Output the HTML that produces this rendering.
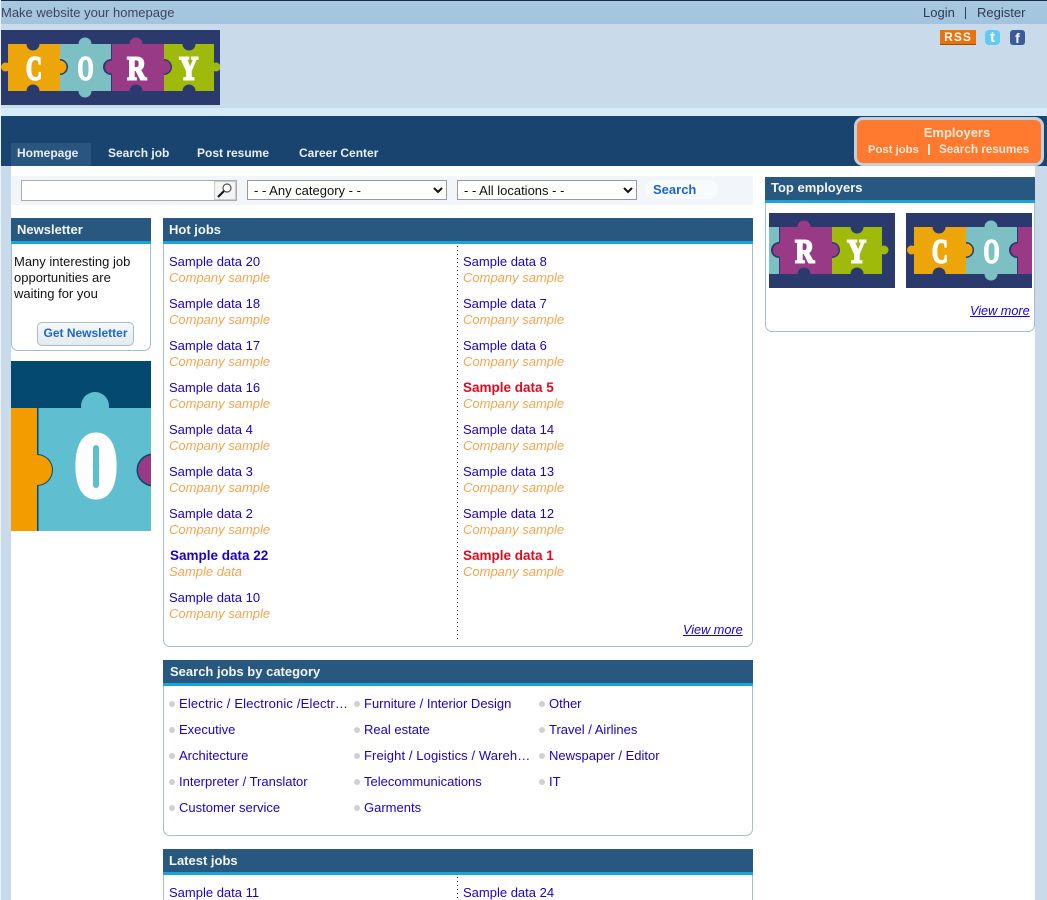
<!DOCTYPE html>
<html style="overflow:hidden;height:900px"><head><meta charset="utf-8"><title>Cory</title>
<style>
html,body{margin:0;padding:0}
body{width:1047px;height:900px;overflow:hidden;position:relative;background:#c9dbeb;font:13px/16px "Liberation Sans",sans-serif;color:#111}
#w{position:absolute;left:0;top:0;width:1047px;height:900px;overflow:hidden}
.a,.t,.l,.c,.b{position:absolute;white-space:nowrap}
a{text-decoration:none;color:inherit}
.l{color:#1c00c8;margin-top:1px}
.c{color:#f5a54e;font-style:italic;margin-top:1px}
.b{font-weight:bold}
.h{position:absolute;background:#28587f;border-bottom:3px solid #17a6dc;color:#f2f6fa;font-weight:bold;height:23px;line-height:24px;box-sizing:content-box}
.p{position:absolute;background:#fff;border:1px solid #a3bfc8;border-top:0;box-sizing:border-box;border-radius:0 0 7px 7px}
.d{position:absolute;width:6px;height:6px;border-radius:3px;background:#cfcfd4;margin-top:1px}
.n{position:absolute;top:145px;color:#e8f0f6;font-weight:bold;font-size:12px;line-height:16px;white-space:nowrap}
.v{position:absolute;left:457px;width:1px;background:repeating-linear-gradient(#222 0 1px,transparent 1px 4px)}
select{position:absolute;font:13px "Liberation Sans",sans-serif;color:#111;background:#fff;border:1px solid #999;box-sizing:border-box;padding:0 2px;margin:0;border-radius:0}
.s{font-family:"Liberation Serif",serif;font-weight:bold;font-size:34px;fill:#fff;stroke:#fff;stroke-width:2px;text-anchor:middle}
</style></head><body><div id="w">

<div class="a" style="left:0;top:0;width:1047px;height:1px;background:#1c2a4a"></div>
<div class="a" style="left:0;top:1px;width:1047px;height:23px;background:linear-gradient(#a8c8e0,#a3c4de)"></div>
<div class="a" style="left:0;top:24px;width:1047px;height:84px;background:#c9dbea"></div>
<div class="a" style="left:0;top:108px;width:1047px;height:8px;background:#d6ebf8"></div>
<div class="a" style="left:0;top:116px;width:1047px;height:50px;background:#1a4470"></div>
<div class="a" style="left:11px;top:166px;width:1024px;height:734px;background:#fff"></div>
<div class="a" style="left:0;top:0;width:1px;height:900px;background:#eaf2f8"></div>

<div class="t" style="left:1px;top:5px;color:#3a4560">Make website your homepage</div>
<div class="t" style="left:923px;top:5px;color:#2c3a55"><a>Login</a></div>
<div class="a" style="left:965px;top:7px;width:1px;height:12px;background:#2c3a55"></div>
<div class="t" style="left:977px;top:5px;color:#2c3a55"><a>Register</a></div>

<!-- logo -->
<svg class="a" style="left:1px;top:30px" width="219" height="75" viewBox="0 0 219 75">
<g id="lg">
<rect x="-20" width="260" height="75" fill="#2b3a6c"/>
<rect x="59" y="14" width="51" height="47" fill="#7cc0c4"/>
<circle cx="84" cy="14" r="6.500" fill="#7cc0c4"/><circle cx="84" cy="61" r="6.500" fill="#7cc0c4"/>
<rect x="163" y="14" width="50" height="47" fill="#a0ba0c"/>
<circle cx="215" cy="37" r="4.500" fill="#a0ba0c"/><rect x="212" y="33" width="4" height="8" fill="#a0ba0c"/>
<circle cx="59" cy="37" r="8" fill="#2b3a6c"/>
<circle cx="110" cy="37" r="8" fill="#2b3a6c"/>
<circle cx="163" cy="37" r="8" fill="#2b3a6c"/>
<rect x="7" y="14" width="52" height="47" fill="#eda60a"/>
<circle cx="59" cy="37" r="6.500" fill="#eda60a"/>
<circle cx="4.500" cy="37" r="4.500" fill="#eda60a"/><rect x="3" y="33" width="6" height="8" fill="#eda60a"/>
<rect x="111" y="14" width="52" height="47" fill="#983a86"/>
<circle cx="110.500" cy="37" r="6.500" fill="#983a86"/><circle cx="163" cy="37" r="6.500" fill="#983a86"/>
<circle cx="135" cy="14" r="6.500" fill="#983a86"/>
<circle cx="32" cy="14" r="6.500" fill="#2b3a6c"/><circle cx="32" cy="61" r="6.500" fill="#2b3a6c"/>
<circle cx="135" cy="61" r="6.500" fill="#2b3a6c"/>
<circle cx="188" cy="14" r="6.500" fill="#2b3a6c"/><circle cx="188" cy="61" r="6.500" fill="#2b3a6c"/>
</g>
<text class="s" transform="translate(33,49.500) scale(.65,1)">C</text><text class="s" transform="translate(84.500,49.500) scale(.6,1)">O</text><text class="s" transform="translate(135.700,49.500) scale(.78,1)">R</text><text class="s" transform="translate(187.700,49.500) scale(.78,1)">Y</text>
</svg>

<!-- social -->
<div class="a" style="left:940px;top:30px;width:36px;height:15px;background:#e8720c;border-bottom:1px solid #a44c00;box-sizing:border-box;color:#fff;font-weight:bold;font-size:12px;line-height:15px;text-align:center;letter-spacing:1px">RSS</div>
<div class="a" style="left:985px;top:30px;width:15px;height:15px;border-radius:4px;background:#62cbf2;color:#fff;font-weight:bold;font-size:15px;line-height:15px;text-align:center">t</div>
<div class="a" style="left:1010px;top:30px;width:15px;height:15px;border-radius:3px;background:#3c5a9a;color:#fff;font-weight:bold;font-size:14px;line-height:16px;text-align:center">f</div>

<!-- nav -->
<div class="a" style="left:11px;top:143px;width:80px;height:23px;background:#29557f"></div>
<div class="n" style="left:17px">Homepage</div>
<div class="n" style="left:108px">Search job</div>
<div class="n" style="left:197px">Post resume</div>
<div class="n" style="left:299px">Career Center</div>

<div class="a" style="left:854px;top:117px;width:190px;height:49px;background:#ff7a2e;border:3px solid #c3cfdc;border-radius:9px;box-sizing:border-box"></div>
<div class="b" style="left:857px;top:125px;width:200px;text-align:center;color:#ffe9d8;font-size:13px">Employers</div>
<div class="b" style="left:868px;top:142px;color:#ffe9d8;font-size:11.300px">Post jobs</div>
<div class="a" style="left:928px;top:144px;width:2px;height:11px;background:#ffe9d8"></div>
<div class="b" style="left:939px;top:142px;color:#ffe9d8;font-size:11.700px">Search resumes</div>

<!-- search -->
<div class="a" style="left:11px;top:176px;width:742px;height:29px;background:#f2f6fa"></div>
<div class="a" style="left:21px;top:180px;width:216px;height:21px;background:#fff;border:1px solid #aaa;box-sizing:border-box"></div>
<div class="a" style="left:214px;top:181px;width:22px;height:19px;background:#f4f4f4;border:1px solid #ccc;box-sizing:border-box">
<svg width="20" height="17" viewBox="0 0 20 17"><circle cx="12" cy="6" r="4" fill="#fff" stroke="#555" stroke-width="1.200"/><path d="M9 9L3 15" stroke="#111" stroke-width="2"/></svg></div>
<select style="left:247px;top:180px;width:200px;height:20px"><option>- - Any category - -</option></select>
<select style="left:457px;top:180px;width:180px;height:20px"><option>- - All locations - -</option></select>
<div class="a" style="left:645px;top:180px;width:73px;height:19px;border-radius:10px;background:#f8fbfd"></div>
<div class="b" style="left:653px;top:181px;color:#1a66cc;font-size:13px;margin-top:1px">Search</div>

<!-- newsletter -->
<div class="p" style="left:11px;top:244px;width:140px;height:107px"></div>
<div class="h" style="left:11px;top:218px;width:134px;padding-left:6px">Newsletter</div>
<div class="t" style="left:14px;top:254px">Many interesting job</div>
<div class="t" style="left:14px;top:270px">opportunities are</div>
<div class="t" style="left:14px;top:286px">waiting for you</div>
<div class="a" style="left:37px;top:322px;width:97px;height:24px;box-sizing:border-box;border:1px solid #a8bcc6;border-radius:5px;background:linear-gradient(#f6f8f9,#e4eaee);color:#1a66d8;font-weight:bold;font-size:12px;line-height:21px;text-align:center">Get Newsletter</div>

<!-- banner -->
<svg class="a" style="left:11px;top:361px" width="140" height="170" viewBox="0 0 140 170">
<rect width="140" height="170" fill="#044a70"/>
<rect y="47" width="140" height="123" fill="#5fbfd0"/>
<circle cx="84" cy="45" r="14" fill="#5fbfd0"/>
<rect x="26" y="47" width="1.500" height="123" fill="#044a70"/>
<circle cx="26" cy="109" r="16" fill="#044a70"/>
<rect y="47" width="26" height="123" fill="#f39c00"/>
<circle cx="26" cy="109" r="15" fill="#f39c00"/>
<circle cx="142" cy="109" r="16.500" fill="#044a70"/><circle cx="142" cy="109" r="15" fill="#983a86"/>
<text transform="translate(85,132) scale(.69,.92)" text-anchor="middle" font-family="Liberation Mono,monospace" font-weight="bold" font-size="90" fill="#fff" stroke="#fff" stroke-width="12">O</text>
<rect x="82" y="84" width="6" height="43" rx="3" fill="#5fbfd0"/>
</svg>

<!-- hot jobs -->
<div class="p" style="left:163px;top:244px;width:590px;height:403px"></div>
<div class="h" style="left:163px;top:218px;width:584px;padding-left:6px">Hot jobs</div>
<div class="v" style="top:246px;height:396px"></div>

<a class="l" style="left:169px;top:253px">Sample data 20</a><div class="c" style="left:169px;top:269px">Company sample</div>
<a class="l" style="left:169px;top:295px">Sample data 18</a><div class="c" style="left:169px;top:311px">Company sample</div>
<a class="l" style="left:169px;top:337px">Sample data 17</a><div class="c" style="left:169px;top:353px">Company sample</div>
<a class="l" style="left:169px;top:379px">Sample data 16</a><div class="c" style="left:169px;top:395px">Company sample</div>
<a class="l" style="left:169px;top:421px">Sample data 4</a><div class="c" style="left:169px;top:437px">Company sample</div>
<a class="l" style="left:169px;top:463px">Sample data 3</a><div class="c" style="left:169px;top:479px">Company sample</div>
<a class="l" style="left:169px;top:505px">Sample data 2</a><div class="c" style="left:169px;top:521px">Company sample</div>
<a class="l" style="left:170px;top:547px;font-weight:bold;font-size:13.500px">Sample data 22</a><div class="c" style="left:169px;top:563px">Sample data</div>
<a class="l" style="left:169px;top:589px">Sample data 10</a><div class="c" style="left:169px;top:605px">Company sample</div>

<a class="l" style="left:463px;top:253px">Sample data 8</a><div class="c" style="left:463px;top:269px">Company sample</div>
<a class="l" style="left:463px;top:295px">Sample data 7</a><div class="c" style="left:463px;top:311px">Company sample</div>
<a class="l" style="left:463px;top:337px">Sample data 6</a><div class="c" style="left:463px;top:353px">Company sample</div>
<a class="l" style="left:463px;top:379px;font-weight:bold;color:#e00a1e;font-size:13.500px">Sample data 5</a><div class="c" style="left:463px;top:395px">Company sample</div>
<a class="l" style="left:463px;top:421px">Sample data 14</a><div class="c" style="left:463px;top:437px">Company sample</div>
<a class="l" style="left:463px;top:463px">Sample data 13</a><div class="c" style="left:463px;top:479px">Company sample</div>
<a class="l" style="left:463px;top:505px">Sample data 12</a><div class="c" style="left:463px;top:521px">Company sample</div>
<a class="l" style="left:463px;top:547px;font-weight:bold;color:#e00a1e;font-size:13.500px">Sample data 1</a><div class="c" style="left:463px;top:563px">Company sample</div>
<a class="l" style="left:683px;top:621px;font-style:italic;text-decoration:underline;font-size:12.700px">View more</a>

<!-- categories -->
<div class="p" style="left:163px;top:686px;width:590px;height:150px"></div>
<div class="h" style="left:163px;top:660px;width:583px;padding-left:7px">Search jobs by category</div>

<div class="d" style="left:169px;top:700px"></div><a class="l" style="left:179px;top:695px;letter-spacing:.17px">Electric / Electronic /Electr…</a>
<div class="d" style="left:169px;top:726px"></div><a class="l" style="left:179px;top:721px">Executive</a>
<div class="d" style="left:169px;top:752px"></div><a class="l" style="left:179px;top:747px">Architecture</a>
<div class="d" style="left:169px;top:778px"></div><a class="l" style="left:179px;top:773px">Interpreter / Translator</a>
<div class="d" style="left:169px;top:804px"></div><a class="l" style="left:179px;top:799px">Customer service</a>

<div class="d" style="left:354px;top:700px"></div><a class="l" style="left:364px;top:695px">Furniture / Interior Design</a>
<div class="d" style="left:354px;top:726px"></div><a class="l" style="left:364px;top:721px">Real estate</a>
<div class="d" style="left:354px;top:752px"></div><a class="l" style="left:364px;top:747px;letter-spacing:.1px">Freight / Logistics / Wareh…</a>
<div class="d" style="left:354px;top:778px"></div><a class="l" style="left:364px;top:773px">Telecommunications</a>
<div class="d" style="left:354px;top:804px"></div><a class="l" style="left:364px;top:799px">Garments</a>

<div class="d" style="left:539px;top:700px"></div><a class="l" style="left:549px;top:695px">Other</a>
<div class="d" style="left:539px;top:726px"></div><a class="l" style="left:549px;top:721px">Travel / Airlines</a>
<div class="d" style="left:539px;top:752px"></div><a class="l" style="left:549px;top:747px">Newspaper / Editor</a>
<div class="d" style="left:539px;top:778px"></div><a class="l" style="left:549px;top:773px">IT</a>

<!-- latest -->
<div class="p" style="left:163px;top:875px;width:590px;height:25px;border-bottom:0;border-radius:0"></div>
<div class="h" style="left:163px;top:849px;width:584px;padding-left:6px">Latest jobs</div>
<div class="v" style="top:877px;height:23px"></div>
<a class="l" style="left:169px;top:884px">Sample data 11</a>
<a class="l" style="left:463px;top:884px">Sample data 24</a>

<!-- top employers -->
<div class="p" style="left:765px;top:203px;width:270px;height:129px"></div>
<div class="h" style="left:765px;top:177px;width:264px;padding-left:6px;line-height:22px">Top employers</div>
<svg class="a" style="left:769px;top:213px" width="126" height="76" viewBox="100 0 126 76">
<use href="#lg"/>
<text class="s" transform="translate(135.700,49.500) scale(.78,1)">R</text><text class="s" transform="translate(187.700,49.500) scale(.78,1)">Y</text>
</svg>
<svg class="a" style="left:906px;top:213px" width="126" height="76" viewBox="-1 0 126 76">
<use href="#lg"/>
<text class="s" transform="translate(33,49.500) scale(.65,1)">C</text><text class="s" transform="translate(84.500,49.500) scale(.6,1)">O</text>
</svg>
<a class="l" style="left:970px;top:302px;font-style:italic;text-decoration:underline;font-size:12.700px">View more</a>

</div></body></html>
